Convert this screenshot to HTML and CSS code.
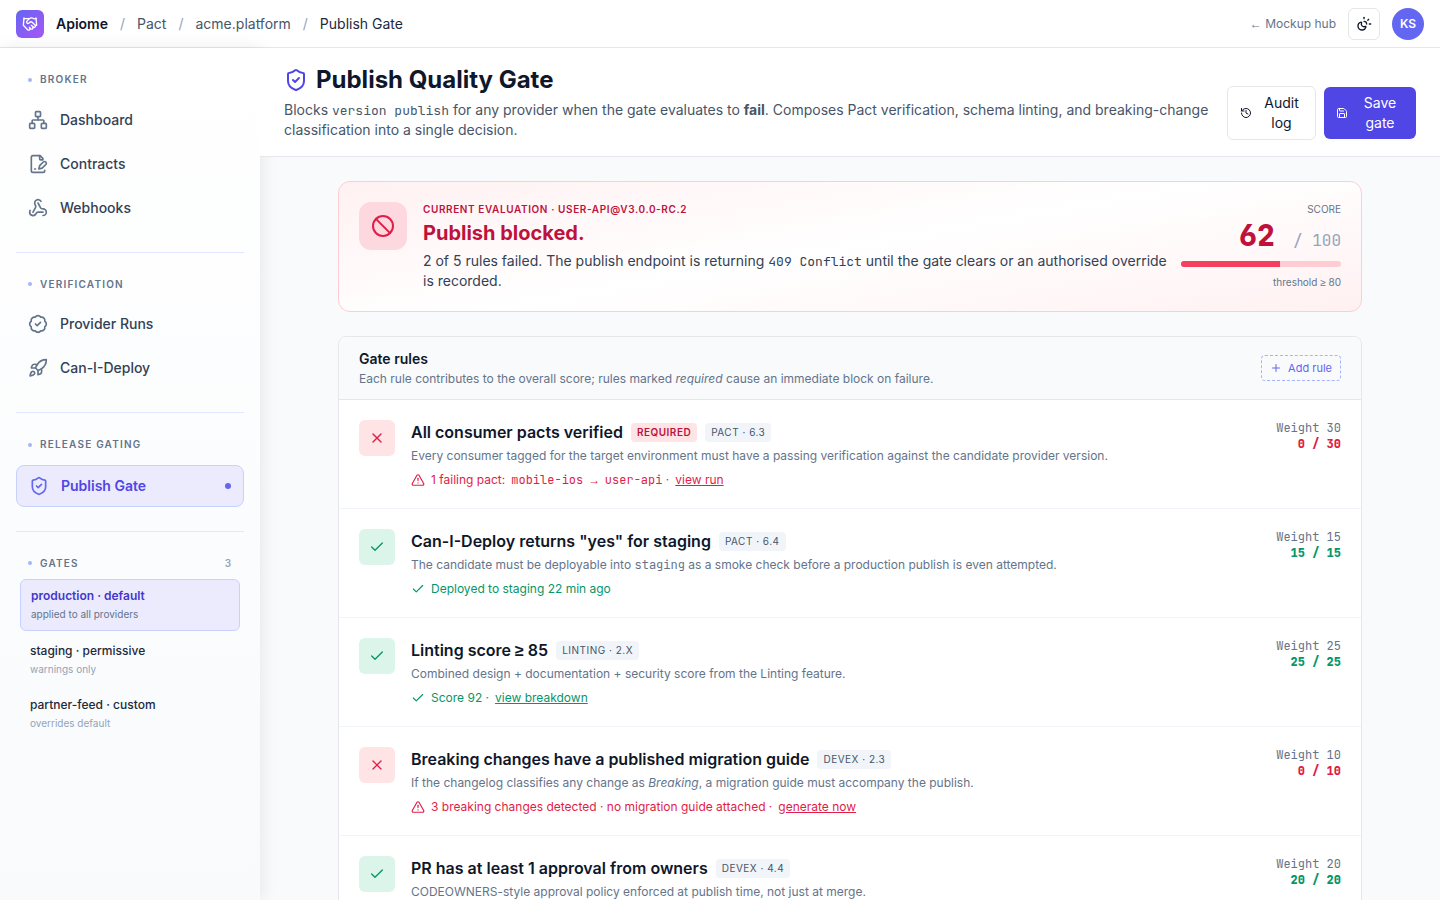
FILE: index.html
```html
<!DOCTYPE html>
<html lang="en">
<head>
    <meta charset="UTF-8">
    <meta name="viewport" content="width=device-width, initial-scale=1.0">
    <title>Publish Gate - Apiome</title>
    <link rel="stylesheet" href="styles.css">
</head>
<body>
    <!-- Shared icons -->
    <svg class="sprite" aria-hidden="true">
        <symbol id="i-shield" viewBox="0 0 24 24"><path d="M20 13c0 5-3.5 7.5-7.66 8.95a1 1 0 0 1-.67-.01C7.5 20.5 4 18 4 13V6a1 1 0 0 1 1-1c2 0 4.5-1.2 6.24-2.72a1.17 1.17 0 0 1 1.52 0C14.51 3.81 17 5 19 5a1 1 0 0 1 1 1z"/><path d="m9 12 2 2 4-4"/></symbol>
        <symbol id="i-check" viewBox="0 0 24 24"><path d="M20 6 9 17l-5-5"/></symbol>
        <symbol id="i-x" viewBox="0 0 24 24"><path d="M18 6 6 18"/><path d="m6 6 12 12"/></symbol>
        <symbol id="i-alert" viewBox="0 0 24 24"><path d="m21.73 18-8-14a2 2 0 0 0-3.48 0l-8 14A2 2 0 0 0 4 21h16a2 2 0 0 0 1.73-3"/><path d="M12 9v4"/><path d="M12 17h.01"/></symbol>
    </svg>

    <header class="topbar">
        <div class="logo">
            <svg class="icon" viewBox="0 0 24 24"><path d="m11 17 2 2a1 1 0 1 0 3-3"/><path d="m14 14 2.5 2.5a1 1 0 1 0 3-3l-3.88-3.88a3 3 0 0 0-4.24 0l-.88.88a1 1 0 1 1-3-3l2.81-2.81a5.79 5.79 0 0 1 7.06-.87l.47.28a2 2 0 0 0 1.42.25L21 4"/><path d="m21 3 1 11h-2"/><path d="M3 3 2 14l6.5 6.5a1 1 0 1 0 3-3"/><path d="M3 4h8"/></svg>
        </div>
        <nav class="crumbs" aria-label="Breadcrumb">
            <a href="#" class="brand">Apiome</a>
            <span class="slash">/</span>
            <a href="#">Pact</a>
            <span class="slash">/</span>
            <a href="#">acme.platform</a>
            <span class="slash">/</span>
            <span class="here">Publish Gate</span>
        </nav>
        <a href="#" class="hub-link"><span class="symbol">←</span> Mockup hub</a>
        <button class="theme-button" type="button" aria-label="Toggle theme">
            <svg class="icon" viewBox="0 0 24 24"><path d="M12 2v2"/><path d="M14.837 16.385a6 6 0 1 1-7.223-7.222c.624-.147.97.66.715 1.248a4 4 0 0 0 5.26 5.259c.589-.255 1.396.09 1.248.715"/><path d="M16 12a4 4 0 0 0-4-4"/><path d="m19 5-1.256 1.256"/><path d="M20 12h2"/></svg>
        </button>
        <div class="avatar">KS</div>
    </header>

    <div class="layout">
        <aside class="sidebar">
            <section class="nav-group">
                <h2 class="nav-title">Broker</h2>
                <a href="#" class="nav-item">
                    <svg class="icon" viewBox="0 0 24 24"><rect x="16" y="16" width="6" height="6" rx="1"/><rect x="2" y="16" width="6" height="6" rx="1"/><rect x="9" y="2" width="6" height="6" rx="1"/><path d="M5 16v-3a1 1 0 0 1 1-1h12a1 1 0 0 1 1 1v3"/><path d="M12 12V8"/></svg>
                    Dashboard
                </a>
                <a href="#" class="nav-item">
                    <svg class="icon" viewBox="0 0 24 24"><path d="M20 19.5v.5a2 2 0 0 1-2 2H6a2 2 0 0 1-2-2V4a2 2 0 0 1 2-2h8.5L18 5.5"/><path d="M8 18h1"/><path d="M14 2v4a1 1 0 0 0 1 1h3"/><path d="M18.42 9.61a2.1 2.1 0 1 1 2.97 2.97L16.95 17 13 18l.99-3.95 4.43-4.44Z"/></svg>
                    Contracts
                </a>
                <a href="#" class="nav-item">
                    <svg class="icon" viewBox="0 0 24 24"><path d="M18 16.98h-5.99c-1.1 0-1.95.94-2.48 1.9A4 4 0 0 1 2 17c.01-.7.2-1.4.57-2"/><path d="m6 17 3.13-5.78c.53-.97.1-2.18-.5-3.1a4 4 0 1 1 6.89-4.06"/><path d="m12 6 3.13 5.73C15.66 12.7 16.9 13 18 13a4 4 0 0 1 0 8"/></svg>
                    Webhooks
                </a>
            </section>

            <section class="nav-group">
                <h2 class="nav-title">Verification</h2>
                <a href="#" class="nav-item">
                    <svg class="icon" viewBox="0 0 24 24"><path d="M3.85 8.62a4 4 0 0 1 4.78-4.77 4 4 0 0 1 6.74 0 4 4 0 0 1 4.78 4.78 4 4 0 0 1 0 6.74 4 4 0 0 1-4.77 4.78 4 4 0 0 1-6.75 0 4 4 0 0 1-4.78-4.77 4 4 0 0 1 0-6.76Z"/><path d="m9 12 2 2 4-4"/></svg>
                    Provider Runs
                </a>
                <a href="#" class="nav-item">
                    <svg class="icon" viewBox="0 0 24 24"><path d="M4.5 16.5c-1.5 1.26-2 5-2 5s3.74-.5 5-2c.71-.84.7-2.13-.09-2.91a2.18 2.18 0 0 0-2.91-.09z"/><path d="m12 15-3-3a22 22 0 0 1 2-3.95A12.88 12.88 0 0 1 22 2c0 2.72-.78 7.5-6 11a22.35 22.35 0 0 1-4 2z"/><path d="M9 12H4s.55-3.03 2-4c1.62-1.08 5 0 5 0"/><path d="M12 15v5s3.03-.55 4-2c1.08-1.62 0-5 0-5"/></svg>
                    Can-I-Deploy
                </a>
            </section>

            <section class="nav-group">
                <h2 class="nav-title">Release Gating</h2>
                <a href="#" class="nav-item active" aria-current="page">
                    <svg class="icon"><use href="#i-shield"/></svg>
                    Publish Gate
                    <span class="nav-dot"></span>
                </a>
            </section>

            <section class="nav-group">
                <h2 class="nav-title">Gates <span class="nav-count">3</span></h2>
                <div class="gate-list">
                    <a href="#" class="gate active">
                        <span class="gate-name">production · default</span>
                        <span class="gate-note">applied to all providers</span>
                    </a>
                    <a href="#" class="gate">
                        <span class="gate-name">staging · permissive</span>
                        <span class="gate-note">warnings only</span>
                    </a>
                    <a href="#" class="gate">
                        <span class="gate-name">partner-feed · custom</span>
                        <span class="gate-note">overrides default</span>
                    </a>
                </div>
            </section>
        </aside>

        <main class="main">
            <div class="page-head">
                <div class="page-intro">
                    <h1 class="page-title"><svg class="icon"><use href="#i-shield"/></svg>Publish Quality Gate</h1>
                    <p class="page-text">Blocks <code>version publish</code> for any provider when the gate evaluates to <strong>fail</strong>. Composes Pact verification, schema linting, and breaking-change classification into a single decision.</p>
                </div>
                <div class="page-actions">
                    <button class="button" type="button">
                        <svg class="icon" viewBox="0 0 24 24"><path d="M3 12a9 9 0 1 0 9-9 9.75 9.75 0 0 0-6.74 2.74L3 8"/><path d="M3 3v5h5"/><path d="M12 7v5l4 2"/></svg>
                        <span>Audit log</span>
                    </button>
                    <button class="button primary" type="button">
                        <svg class="icon" viewBox="0 0 24 24"><path d="M15.2 3a2 2 0 0 1 1.4.6l3.8 3.8a2 2 0 0 1 .6 1.4V19a2 2 0 0 1-2 2H5a2 2 0 0 1-2-2V5a2 2 0 0 1 2-2z"/><path d="M17 21v-7a1 1 0 0 0-1-1H8a1 1 0 0 0-1 1v7"/><path d="M7 3v4a1 1 0 0 0 1 1h7"/></svg>
                        <span>Save gate</span>
                    </button>
                </div>
            </div>

            <div class="content">
                <!-- Current evaluation -->
                <section class="verdict">
                    <div class="verdict-icon">
                        <svg class="icon" viewBox="0 0 24 24"><circle cx="12" cy="12" r="10"/><path d="m4.9 4.9 14.2 14.2"/></svg>
                    </div>
                    <div class="verdict-body">
                        <div class="verdict-label">Current evaluation · user-api@v3.0.0-rc.2</div>
                        <h2 class="verdict-title">Publish blocked.</h2>
                        <p class="verdict-text">2 of 5 rules failed. The publish endpoint is returning <code>409 Conflict</code> until the gate clears or an authorised override is recorded.</p>
                    </div>
                    <div class="score">
                        <div class="score-label">Score</div>
                        <div class="score-value">62 <span class="score-max">/ 100</span></div>
                        <div class="score-bar"><div class="score-fill" style="width: 62%"></div></div>
                        <div class="score-note">threshold <span class="symbol">≥</span> 80</div>
                    </div>
                </section>

                <!-- Rules -->
                <section class="rules">
                    <div class="rules-head">
                        <div>
                            <h2 class="rules-title">Gate rules</h2>
                            <p class="rules-text">Each rule contributes to the overall score; rules marked <em>required</em> cause an immediate block on failure.</p>
                        </div>
                        <button class="add-button" type="button">
                            <svg class="icon" viewBox="0 0 24 24"><path d="M5 12h14"/><path d="M12 5v14"/></svg>
                            Add rule
                        </button>
                    </div>

                    <article class="rule fail">
                        <div class="rule-icon"><svg class="icon"><use href="#i-x"/></svg></div>
                        <div class="rule-body">
                            <div class="rule-head">
                                <h3 class="rule-title">All consumer pacts verified</h3>
                                <span class="tag required">Required</span>
                                <span class="tag">Pact · 6.3</span>
                            </div>
                            <p class="rule-text">Every consumer tagged for the target environment must have a passing verification against the candidate provider version.</p>
                            <div class="rule-status">
                                <svg class="icon"><use href="#i-alert"/></svg>
                                <span>1 failing pact:</span>
                                <span><code>mobile-ios <span class="mono-symbol">→</span> user-api</code> ·</span>
                                <a href="#">view run</a>
                            </div>
                        </div>
                        <div class="rule-score">
                            <div class="rule-weight">Weight 30</div>
                            <div class="rule-points">0 / 30</div>
                        </div>
                    </article>

                    <article class="rule pass">
                        <div class="rule-icon"><svg class="icon"><use href="#i-check"/></svg></div>
                        <div class="rule-body">
                            <div class="rule-head">
                                <h3 class="rule-title">Can-I-Deploy returns "yes" for staging</h3>
                                <span class="tag">Pact · 6.4</span>
                            </div>
                            <p class="rule-text">The candidate must be deployable into <code>staging</code> as a smoke check before a production publish is even attempted.</p>
                            <div class="rule-status">
                                <svg class="icon"><use href="#i-check"/></svg>
                                <span>Deployed to staging 22 min ago</span>
                            </div>
                        </div>
                        <div class="rule-score">
                            <div class="rule-weight">Weight 15</div>
                            <div class="rule-points">15 / 15</div>
                        </div>
                    </article>

                    <article class="rule pass">
                        <div class="rule-icon"><svg class="icon"><use href="#i-check"/></svg></div>
                        <div class="rule-body">
                            <div class="rule-head">
                                <h3 class="rule-title">Linting score <span class="symbol">≥</span> 85</h3>
                                <span class="tag">Linting · 2.x</span>
                            </div>
                            <p class="rule-text">Combined design + documentation + security score from the Linting feature.</p>
                            <div class="rule-status">
                                <svg class="icon"><use href="#i-check"/></svg>
                                <span>Score 92 ·</span>
                                <a href="#">view breakdown</a>
                            </div>
                        </div>
                        <div class="rule-score">
                            <div class="rule-weight">Weight 25</div>
                            <div class="rule-points">25 / 25</div>
                        </div>
                    </article>

                    <article class="rule fail">
                        <div class="rule-icon"><svg class="icon"><use href="#i-x"/></svg></div>
                        <div class="rule-body">
                            <div class="rule-head">
                                <h3 class="rule-title">Breaking changes have a published migration guide</h3>
                                <span class="tag">DevEx · 2.3</span>
                            </div>
                            <p class="rule-text">If the changelog classifies any change as <em>Breaking</em>, a migration guide must accompany the publish.</p>
                            <div class="rule-status">
                                <svg class="icon"><use href="#i-alert"/></svg>
                                <span>3 breaking changes detected · no migration guide attached ·</span>
                                <a href="#">generate now</a>
                            </div>
                        </div>
                        <div class="rule-score">
                            <div class="rule-weight">Weight 10</div>
                            <div class="rule-points">0 / 10</div>
                        </div>
                    </article>

                    <article class="rule pass">
                        <div class="rule-icon"><svg class="icon"><use href="#i-check"/></svg></div>
                        <div class="rule-body">
                            <div class="rule-head">
                                <h3 class="rule-title">PR has at least 1 approval from owners</h3>
                                <span class="tag">DevEx · 4.4</span>
                            </div>
                            <p class="rule-text">CODEOWNERS-style approval policy enforced at publish time, not just at merge.</p>
                        </div>
                        <div class="rule-score">
                            <div class="rule-weight">Weight 20</div>
                            <div class="rule-points">20 / 20</div>
                        </div>
                    </article>
                </section>
            </div>
        </main>
    </div>
</body>
</html>
```

FILE: styles.css
```css
* {
    box-sizing: border-box;
}

body {
    margin: 0;
    height: 100vh;
    display: flex;
    flex-direction: column;
    overflow: hidden;
    font-family: Inter, "Liberation Sans", sans-serif;
    font-size: 14px;
    line-height: 20px;
    color: #0f172a;
    background: #f8fafc;
}

h1, h2, h3, p {
    margin: 0;
}

a {
    color: inherit;
    text-decoration: none;
}

button {
    font: inherit;
    cursor: pointer;
}

code {
    font-family: "JetBrains Mono", "Liberation Mono", monospace;
    font-size: 13px;
    line-height: 1;
}

.symbol {
    font-family: "Liberation Sans", sans-serif;
    line-height: 1;
}

.mono-symbol {
    font-family: "Liberation Mono", monospace;
    line-height: 1;
}

.sprite {
    display: none;
}

.icon {
    width: 16px;
    height: 16px;
    flex: none;
    fill: none;
    stroke: currentColor;
    stroke-width: 2;
    stroke-linecap: round;
    stroke-linejoin: round;
}

/* Top bar */
.topbar {
    flex: none;
    height: 48px;
    display: flex;
    align-items: center;
    gap: 12px;
    padding: 0 16px;
    background: #fff;
    border-bottom: 1px solid #e5e7eb;
}

.logo {
    width: 28px;
    height: 28px;
    display: flex;
    align-items: center;
    justify-content: center;
    border-radius: 6px;
    color: #fff;
    background: linear-gradient(135deg, #6366f1, #a855f7);
}

.crumbs {
    flex: 1;
    display: flex;
    gap: 12px;
    color: #475569;
}

.brand {
    font-weight: 600;
    color: #0f172a;
}

.slash {
    color: #94a3b8;
}

.here {
    color: #1e293b;
}

.hub-link {
    font-size: 12px;
    color: #64748b;
}

.theme-button {
    width: 32px;
    height: 32px;
    display: flex;
    align-items: center;
    justify-content: center;
    padding: 0;
    color: #0f172a;
    background: #fff;
    border: 1px solid #e5e7eb;
    border-radius: 6px;
}

.avatar {
    width: 32px;
    height: 32px;
    border-radius: 50%;
    background: #6366f1;
    color: #fff;
    font-size: 12px;
    font-weight: 600;
    line-height: 32px;
    text-align: center;
}

.layout {
    flex: 1;
    min-height: 0;
    display: flex;
}

/* Sidebar */
.sidebar {
    flex: none;
    width: 260px;
    padding: 0 16px;
    overflow: hidden auto;
    background: linear-gradient(180deg, #fff, #f8fafc);
    box-shadow: 2px 0 16px rgba(0, 0, 0, 0.08);
}

.nav-group {
    padding: 24px 0;
    border-bottom: 1px solid #e0e7ff;
}

.nav-group:last-child {
    border-bottom: none;
}

.nav-title {
    display: flex;
    align-items: center;
    gap: 8px;
    padding: 0 13px 0 12px;
    margin-bottom: 12px;
    font-size: 10px;
    line-height: 1.55;
    font-weight: 600;
    letter-spacing: 0.12em;
    text-transform: uppercase;
    color: #64748b;
}

.nav-title::before {
    content: "";
    width: 4px;
    height: 4px;
    border-radius: 50%;
    background: #a5b4fc;
}

.nav-count {
    margin-left: auto;
    letter-spacing: 0;
    color: #94a3b8;
}

.nav-item {
    display: flex;
    align-items: center;
    gap: 12px;
    height: 40px;
    padding: 0 12px;
    font-weight: 500;
    color: #334155;
}

.nav-item + .nav-item {
    margin-top: 4px;
}

.nav-item .icon {
    width: 20px;
    height: 20px;
    color: #64748b;
}

.nav-item.active {
    height: 42px;
    border: 1px solid #c7d2fe;
    border-radius: 8px;
    background: #ebebfd;
    color: #4f46e5;
    font-weight: 600;
}

.nav-item.active .icon {
    color: #6366f1;
}

.nav-dot {
    width: 6px;
    height: 6px;
    margin-left: auto;
    border-radius: 50%;
    background: #6366f1;
}

.gate-list {
    display: flex;
    flex-direction: column;
    gap: 4px;
    padding: 0 4px;
    margin-top: -4px;
}

.gate {
    display: flex;
    flex-direction: column;
    gap: 1px;
    padding: 7px 10px 8px;
    font-size: 12px;
    line-height: 18px;
    border-radius: 6px;
    color: #1e293b;
}

.gate-name {
    font-weight: 500;
}

.gate-note {
    font-size: 10px;
    line-height: 16px;
    color: #94a3b8;
}

.gate.active {
    border: 1px solid #c7d2fe;
    background: #ebebfd;
    color: #4338ca;
}

.gate.active .gate-name {
    font-weight: 600;
}

.gate.active .gate-note {
    color: #64748b;
}

/* Page header */
.main {
    flex: 1;
    min-width: 0;
    display: flex;
    flex-direction: column;
}

.page-head {
    position: relative;
    display: flex;
    align-items: flex-end;
    gap: 16px;
    padding: 16px 24px;
    background: #fff;
    border-bottom: 1px solid #e5e7eb;
}

.page-intro {
    flex: 1;
}

.page-title {
    display: flex;
    align-items: center;
    gap: 8px;
    margin-bottom: 4px;
    font-size: 24px;
    line-height: 32px;
    font-weight: 700;
}

.page-title .icon {
    width: 24px;
    height: 24px;
    color: #4f46e5;
}

.page-text {
    color: #475569;
}

.page-actions {
    display: flex;
    align-items: center;
    gap: 8px;
}

.button {
    display: flex;
    align-items: center;
    gap: 8px;
    width: 89px;
    padding: 6px 12px;
    color: #0f172a;
    background: #fff;
    border: 1px solid #e5e7eb;
    border-radius: 6px;
}

.button span {
    flex: 1;
}

.button .icon {
    width: 12px;
    height: 12px;
}

.button.primary {
    width: 92px;
    border: none;
    color: #fff;
    background: #4f46e5;
}

/* Content */
.content {
    flex: 1;
    min-height: 0;
    padding: 24px 24px 0;
    overflow: hidden;
}

.verdict,
.rules {
    max-width: 1024px;
    margin: 0 auto 24px;
}

.verdict {
    display: flex;
    align-items: flex-start;
    gap: 12px;
    padding: 20px;
    border: 1px solid #fecdd3;
    border-radius: 12px;
    background: linear-gradient(170deg, #fff1f2, #fff 50%, #fff1f2);
}

.verdict-icon {
    flex: none;
    width: 48px;
    height: 48px;
    margin-right: 4px;
    display: flex;
    align-items: center;
    justify-content: center;
    border-radius: 12px;
    background: #fdd9df;
    color: #e11d48;
}

.verdict-icon .icon {
    width: 24px;
    height: 24px;
}

.verdict-body {
    flex: 1;
}

.verdict-label {
    font-size: 10px;
    line-height: 15px;
    font-weight: 600;
    letter-spacing: 0.06em;
    text-transform: uppercase;
    color: #be123c;
}

.verdict-title {
    margin: 2px 0 4px;
    font-size: 20px;
    line-height: 28px;
    font-weight: 700;
    color: #be123c;
}

.verdict-text {
    color: #334155;
}

.score {
    flex: none;
    width: 160px;
    text-align: right;
    font-size: 10px;
    line-height: 15px;
    color: #64748b;
}

.score-label {
    text-transform: uppercase;
}

.score-value {
    font-family: "JetBrains Mono", "Liberation Mono", monospace;
    font-size: 30px;
    line-height: 36px;
    font-weight: 800;
    color: #be123c;
}

.score-max {
    font-size: 16px;
    line-height: 16px;
    font-weight: 400;
    color: #94a3b8;
}

.score-bar {
    height: 6px;
    margin: 8px 0;
    border-radius: 3px;
    overflow: hidden;
    background: #fecdd3;
}

.score-fill {
    height: 100%;
    background: #f43f5e;
}

/* Gate rules */
.rules {
    background: #fff;
    border: 1px solid #e5e7eb;
    border-radius: 8px;
    overflow: hidden;
}

.rules-head {
    display: flex;
    align-items: center;
    justify-content: space-between;
    padding: 12px 20px;
    background: #f8fafc;
    border-bottom: 1px solid #e5e7eb;
}

.rules-title {
    font-size: 14px;
    line-height: 20px;
    font-weight: 600;
}

.rules-text {
    margin-top: 2px;
    font-size: 12px;
    line-height: 16px;
    color: #64748b;
}

.add-button {
    display: flex;
    align-items: center;
    gap: 6px;
    padding: 4px 8px;
    font-size: 11px;
    line-height: 16px;
    color: #6366f1;
    background: transparent;
    border: 1px dashed #a5b4fc;
    border-radius: 4px;
}

.add-button .icon {
    width: 12px;
    height: 12px;
}

.rule {
    display: flex;
    align-items: flex-start;
    gap: 16px;
    padding: 20px;
    border-bottom: 1px solid #f1f5f9;
}

.rule-icon {
    flex: none;
    width: 36px;
    height: 36px;
    display: flex;
    align-items: center;
    justify-content: center;
    border-radius: 6px;
}

.rule-body {
    flex: 1;
}

.rule-head {
    display: flex;
    align-items: center;
    gap: 8px;
}

.rule-title {
    font-size: 16px;
    line-height: 24px;
    font-weight: 600;
}

.tag {
    padding: 2px 6px;
    border-radius: 4px;
    font-size: 10px;
    line-height: 15px;
    letter-spacing: 0.05em;
    text-transform: uppercase;
    color: #475569;
    background: #f1f5f9;
}

.tag.required {
    font-weight: 600;
    color: #be123c;
    background: #ffe4e6;
}

.rule-text {
    margin-top: 4px;
    font-size: 12px;
    line-height: 16px;
    color: #64748b;
}

.rule-status {
    display: flex;
    align-items: center;
    gap: 6px;
    margin-top: 8px;
    font-size: 12px;
    line-height: 16px;
}

.rule-text code,
.rule-status code {
    font-size: 12px;
}

.rule-status .icon {
    width: 14px;
    height: 14px;
}

.rule-status a {
    text-decoration: underline;
}

.rule-score {
    font-family: "JetBrains Mono", "Liberation Mono", monospace;
    font-size: 12px;
    line-height: 16px;
    text-align: right;
}

.rule-weight {
    color: #64748b;
}

.rule-points {
    font-weight: 800;
}

.fail .rule-icon {
    background: #ffe4e6;
}

.pass .rule-icon {
    background: #dbf5ea;
}

.fail .rule-icon,
.fail .rule-status,
.fail .rule-points {
    color: #e11d48;
}

.pass .rule-icon,
.pass .rule-status,
.pass .rule-points {
    color: #059669;
}
```
